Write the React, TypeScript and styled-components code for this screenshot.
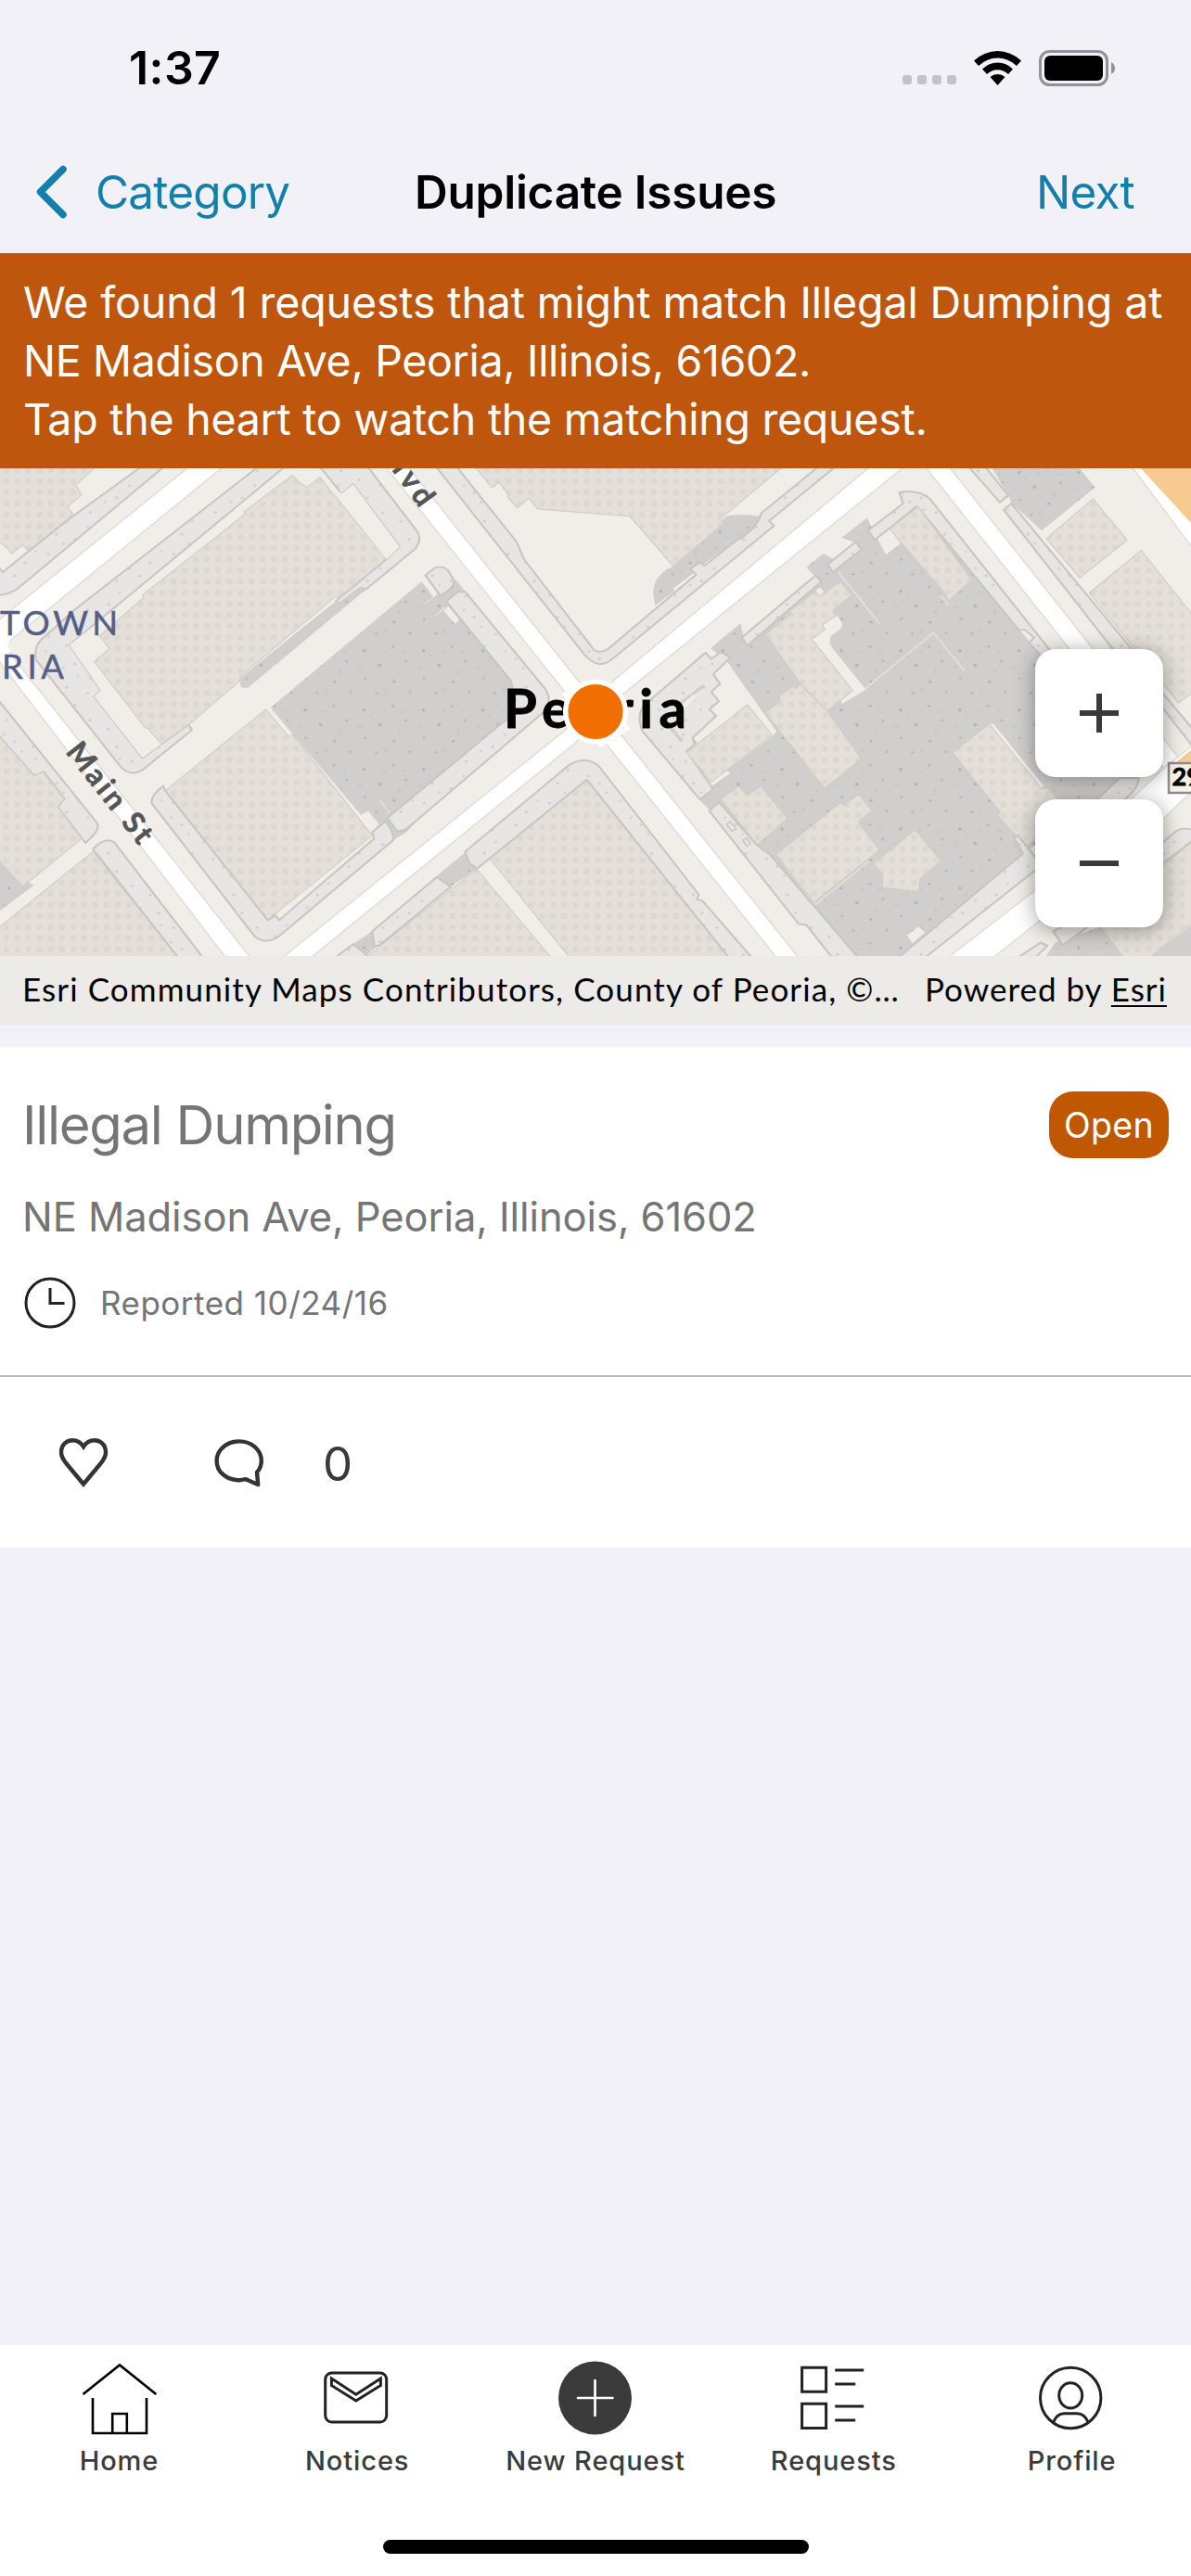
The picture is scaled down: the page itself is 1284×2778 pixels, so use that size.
import React, { FC, ReactNode } from 'react'
import styled, { createGlobalStyle, css } from 'styled-components'

const color = {
  background: '#f2f1f7',
  accent: '#bf560d',
  badge: '#bf5800',
  link: '#1280ab',
  grey: '#757575',
  dark: '#3a3a3a',
  marker: '#f06f00',
}

const App: FC = () => (
  <Screen>
    <GlobalStyle />
    <StatusBar />
    <NavBar>
      <NavBack>
        <ChevronIcon />
        <NavLink spacing={-0.8}>Category</NavLink>
      </NavBack>
      <NavTitle>Duplicate Issues</NavTitle>
      <NavNext>
        <NavLink spacing={-0.8}>Next</NavLink>
      </NavNext>
    </NavBar>
    <Banner>
      <BannerLine spacing={-0.12}>We found 1 requests that might match Illegal Dumping at</BannerLine>
      <BannerLine spacing={-0.34}>NE Madison Ave, Peoria, Illinois, 61602.</BannerLine>
      <BannerLine spacing={-0.25}>Tap the heart to watch the matching request.</BannerLine>
    </Banner>
    <MapPanel>
      <StreetMap />
      <ZoomControls>
        <ZoomButton aria-label="Zoom in">
          <svg width="42" height="42" viewBox="0 0 42 42">
            <path d="M0 21H42M21 0V42" stroke={color.dark} strokeWidth="6" />
          </svg>
        </ZoomButton>
        <ZoomButton aria-label="Zoom out">
          <svg width="42" height="42" viewBox="0 0 42 42">
            <path d="M0 21H42" stroke={color.dark} strokeWidth="6" />
          </svg>
        </ZoomButton>
      </ZoomControls>
      <Attribution>
        <Credits>Esri Community Maps Contributors, County of Peoria, ©…</Credits>
        <PoweredBy>
          Powered by <u>Esri</u>
        </PoweredBy>
      </Attribution>
    </MapPanel>
    <Card>
      <CardBody>
        <CardHeader>
          <CardTitle>Illegal Dumping</CardTitle>
          <Badge>Open</Badge>
        </CardHeader>
        <Address>NE Madison Ave, Peoria, Illinois, 61602</Address>
        <Reported>
          <ClockIcon />
          <span>Reported 10/24/16</span>
        </Reported>
      </CardBody>
      <CardActions>
        <HeartIcon />
        <Comments>
          <CommentIcon />
          <Count>0</Count>
        </Comments>
      </CardActions>
    </Card>
    <TabBar>
      <Tabs>
        {tabs.map(({ label, icon }) => (
          <Tab key={label}>
            <svg width="80" height="80" viewBox="0 0 80 80" fill="none" stroke="#222" strokeWidth="3" overflow="visible">
              {icon}
            </svg>
            <TabLabel>{label}</TabLabel>
          </Tab>
        ))}
      </Tabs>
      <HomeIndicator />
    </TabBar>
  </Screen>
)

export default App

const tabs: { label: string; icon: ReactNode }[] = [
  {
    label: 'Home',
    icon: (
      <path stroke="#000" strokeWidth="2.6" d="M1.5 36L41 4.5L80.3 36M12 40V78H70V40M33.2 78V57H48.8V78" />
    ),
  },
  {
    label: 'Notices',
    icon: (
      <>
        <rect x="5.7" y="13" width="66" height="53" rx="7" />
        <path d="M12.4 19L38.8 36.3L65.4 19V26.5L38.8 43L12.4 26.5Z" />
      </>
    ),
  },
  {
    label: 'New Request',
    icon: (
      <>
        <circle cx="39.5" cy="40" r="39.5" fill={color.dark} stroke="none" />
        <path stroke="#fff" strokeWidth="2.7" strokeLinecap="round" d="M21 40H58.5M39.5 21V59" />
      </>
    ),
  },
  {
    label: 'Requests',
    icon: (
      <path d="M5.6 7.3H31.6V33.3H5.6ZM5.6 46.3H31.6V72.6H5.6ZM41.2 10H72.2M41.2 25H63.2M41.2 49H72.2M41.2 64H63.2" />
    ),
  },
  {
    label: 'Profile',
    icon: (
      <>
        <circle cx="38.2" cy="40" r="32.7" />
        <ellipse cx="38.2" cy="37.3" rx="12.5" ry="13.6" />
        <path d="M19.8 66Q23 57 31.5 56.7H45.2Q53.5 57 57 66" />
      </>
    ),
  },
]

const StatusBar: FC = () => (
  <StatusRow>
    <Clock>1:37</Clock>
    <StatusIcons>
      <Signal>
        <i />
        <i />
        <i />
        <i />
      </Signal>
      <svg width="51" height="37" viewBox="0 0 51 37">
        <path d="M25.5 0Q39.5 0 51 10.5L46 16Q37 7.5 25.5 7.5T5 16L0 10.5Q11.5 0 25.5 0Z" />
        <path d="M25.5 12.5Q35 12.5 42 19.5L37 25Q32 20.2 25.5 20.2T14 25L9 19.5Q16 12.5 25.5 12.5Z" />
        <path d="M25.5 25Q30 25 33.5 28L25.5 37L17.5 28Q21 25 25.5 25Z" />
      </svg>
      <svg width="83" height="39" viewBox="0 0 83 39">
        <rect x="1.5" y="1.5" width="72" height="36" rx="10" fill="none" stroke="#929196" strokeWidth="3" />
        <rect x="6" y="6" width="63" height="27" rx="6" />
        <path d="M78 13Q82 15 82 19.5T78 26Z" fill="#929196" />
      </svg>
    </StatusIcons>
  </StatusRow>
)

const ChevronIcon: FC = () => (
  <svg width="34" height="58" viewBox="0 0 34 58" fill="none" stroke={color.link} strokeWidth="7.5" strokeLinecap="round" strokeLinejoin="round">
    <path d="M29 4.5L4.5 29L29 53.5" />
  </svg>
)

const ClockIcon: FC = () => (
  <svg width="56" height="56" viewBox="0 0 56 56" fill="none" stroke="#222" strokeWidth="3">
    <circle cx="28" cy="28" r="26" />
    <path d="M28 12V28.5H43.5" />
  </svg>
)

const HeartIcon: FC = () => (
  <svg width="54" height="54" viewBox="0 0 54 54" fill="none" stroke="#333" strokeWidth="4.4">
    <path d="M27 50.5L9.5 29.5C5 24 3 21 3 16.2C3 8.5 8.3 3.2 15.2 3.2C20.5 3.2 24.2 5.5 27 10C29.8 5.5 33.5 3.2 38.8 3.2C45.7 3.2 51 8.5 51 16.2C51 21 49 24 44.5 29.5Z" />
  </svg>
)

const CommentIcon: FC = () => (
  <svg width="54" height="52" viewBox="0 0 54 52" fill="none" stroke="#333" strokeWidth="4.4" strokeLinejoin="round" overflow="visible">
    <path d="M46 35.8C49.2 32.2 50.8 28 50.8 23.4C50.8 11.4 40 2.4 26.8 2.4S2.6 11.4 2.6 23.4S13.4 44.2 26.8 44.2C29.2 44.2 31.6 43.8 34 43.2L47.2 49Z" />
  </svg>
)

type ShapeProps = { d: string }

const Building: FC<ShapeProps> = ({ d }) => (
  <path d={d} fill="url(#building)" stroke="#d5ccc4" strokeWidth="3" />
)
const Walk: FC<ShapeProps> = ({ d }) => <path d={d} fill="url(#walk)" stroke="#c8c7bf" strokeWidth="5.5" />
const Lot: FC<ShapeProps> = ({ d }) => <path d={d} fill="url(#lot)" />
const Road: FC<ShapeProps> = ({ d }) => <path d={d} fill="#fff" stroke="#dfded7" strokeWidth="4" />
const Ground: FC<ShapeProps> = ({ d }) => <path d={d} fill="#f1eee9" />

const WestBlocks: FC = () => (
  <>
    <Building d="M-5 10H252L200 68L215 98L178 135L192 160L75 275L60 255L32 282L5 250H-5Z" />
    <Walk d="M372 10H432L45 393Q20 412 -5 412V325L8 340L75 275L192 165Z" />

    <Walk d="M680 10L200 455L110 550Q88 575 95 615L318 950Q345 985 380 955L505 835L497 818L425 878L375 922L248 730L265 710L183 568L750 10Z" />
    <Ground d="M183 568L310 450L740 40L770 37L425 878L375 922L248 730L265 710Z" />
    <Building d="M770 37L795 68L798 66L808 75L842 43L1018 300L895 432L885 415L632 668V680L497 818L425 878L388 828H382L248 620L288 580L262 540L378 420L375 412L646 158L642 152Z" />
    <Walk d="M842 10H968L1100 215Q1110 240 1095 265L965 393L950 388L895 437L885 430L1018 300L1052 260L930 65L900 95Z" />
    <Ground d="M848 43L900 95L930 65L1052 260L1018 300Z" />
    <Lot d="M885 430L895 437L950 388L965 393L655 700Q635 710 632 690V672Z" />

    <Lot d="M1110 370L1142 418L1200 365L1225 400L1430 700L1330 820L1070 1155L1035 1180L950 1100L712 765Z" />
    <Ground d="M1110 362L1122 355L1148 410L1140 416ZM1168 460L1180 447L1210 490L1198 503ZM950 1100L970 1088L998 1130L980 1155ZM700 770L712 765L770 848L760 855Z" />
    <path d="M1120 438L1145 415M1145 478L1170 452M1000 1055L1025 1095" stroke="#e3e1dd" strokeWidth="4" />
    <Walk d="M1120 350L1145 327Q1165 318 1180 335L1195 365Q1200 385 1160 415Z" />
    <Walk d="M1175 432L1205 402H1225L1435 705Q1455 740 1435 775L1075 1140Q1060 1155 1045 1150L1020 1110L1335 800Q1365 760 1345 680Z" />
    <Building d="M700 770L760 855L770 848L980 1165L970 1175L705 1430L435 1025Z" />
    <Walk d="M430 1010Q395 1040 400 1065L670 1480Q700 1510 735 1480L1035 1180Q1040 1160 1015 1120L980 1155L985 1175L735 1430L725 1415L705 1430L435 1025Z" />

    <Walk d="M-5 740L255 1125Q268 1145 225 1188L152 1075L170 1050L115 965L90 978L-5 850Z" />
    <Building d="M-5 850L90 978L112 965L170 1050L152 1075L215 1175L60 1325L-5 1240Z" />
    <Lot d="M-5 1240L60 1325L72 1310L90 1320L-5 1405Z" />
    <Building d="M-5 1455L245 1215L468 1545H-5Z" />
    <Walk d="M245 1208Q275 1168 300 1185L533 1545H468Z" />
  </>
)

const CentreBlocks: FC = () => (
  <>
    <Lot d="M1913 165Q1950 155 1998 165L1990 200L1833 350L1725 445Q1705 350 1758 315Z" />
    <path d="M1775 395L1830 345M1855 318L1945 240" stroke="#f1eee9" strokeWidth="8" />
    <Building d="M1250 10L1295 75L1315 60L1338 98L1336 104L1362 140L1392 108L1415 143L1568 157L1658 165L1773 322L1905 188L1895 175L2062 10Z" />
    <Ground d="M1415 143L1568 157L1658 165L1773 322L1758 330Q1705 370 1725 445L1600 570H1565L1400 300Z" />
    <path d="M1415 143L1568 157L1658 165L1773 322" fill="none" stroke="#d5ccc4" strokeWidth="3" />
    <Walk d="M1148 10L1540 600Q1578 650 1615 610L2038 195L2025 180L2200 10H2155L2005 155Q1990 210 1940 240L1855 320L1843 310L1818 330L1833 348L1600 582Q1580 595 1565 585L1380 300L1360 245L1202 10Z" />

    <Building d="M1545 990L1918 1545H1498L1288 1235Z" />
    <Building d="M1255 1270L1450 1545H965Z" />
    <Lot d="M1150 1292L1225 1218L1255 1270L1187 1325ZM930 1505L980 1465L995 1510L960 1545Z" />
    <Walk d="M1225 1215L1500 943Q1540 915 1575 945L1840 1350L1835 1365L1850 1370L1978 1545H1918L1545 990L1255 1270L1235 1250Z" />
    <Walk d="M980 1465L1150 1295L1187 1325L1000 1508L985 1512Z" />
    <Walk d="M885 1545L930 1505L965 1540V1545Z" />
  </>
)

const EastBlocks: FC = () => (
  <g transform="translate(1568 0)">
    <Lot d="M303 578L382 500L390 545L580 355L555 325L600 282L640 310L690 250L648 232L715 170L740 230L850 135L1200 640L1240 960L1430 980L1125 1222L805 1545H685L275 1055L300 1000L470 850L350 625Z" />
    <Ground d="M345 618L310 660L328 690L305 715L325 745L300 770L318 790L255 860L400 755L465 855L477 840Z" />
    <Ground d="M625 470Q655 490 648 515L620 540Q612 560 625 580L712 708L650 752L640 730L570 550Z" />
    <Ground d="M742 235L775 205L803 250L765 285ZM578 400L592 388L602 405L590 417ZM820 1478L850 1450L868 1468L835 1502ZM305 1010L300 1000L345 960L355 970ZM1037 815L1048 815L1180 1010L1170 1018Z" />
    <path d="M710 705L890 530M640 340L750 505M890 530L972 650M578 1382L720 1245M478 1225L578 1382M910 415L930 443" stroke="#e2dfda" strokeWidth="5" fill="none" />
    <Walk d="M800 90Q850 80 880 110L1200 590L1175 605L1142 560L1155 545L1130 520L1115 522L855 145L845 135L735 240L718 210L810 125Z" />
    <Walk d="M612 315L685 245L700 270L625 340Z" />
    <Walk d="M385 545L580 350L595 370L400 570Z" />
    <Walk d="M290 592L305 612L330 590L355 608L310 660L328 690L305 715L325 745L300 770L318 790L255 860L265 875L240 900L310 1020L275 1052L125 840Q105 790 130 755Z" />
    <path d="M215 760L285 695M200 830L228 870" stroke="#d0cec6" strokeWidth="9" />
    <path d="M222 770L262 728" stroke="#f1eee9" strokeWidth="14" />
    <Building d="M400 755L465 850L305 998L240 905Z" />
    <Building d="M448 535L515 470L512 462L580 400L590 415L645 370L675 412L625 460L635 475L597 505L605 520L570 550L678 712L610 775L540 690Z" />
    <Building d="M540 690L555 712L610 775L700 925L603 1017L460 800L448 780L485 745V725L520 700L528 705Z" />
    <Building d="M775 205L850 135L990 365L930 430L918 405Z" />
    <Building d="M330 1050L378 1010L400 1040L435 1010L505 1112L425 1195Z" />
    <Building d="M475 1225L645 1062L655 1070L693 1035L727 1087L692 1122L748 1210L575 1375Z" />
    <Building d="M842 1147L910 1245L855 1300L850 1340L755 1328L757 1290L732 1253Z" />
    <Building d="M940 905L1037 815L1175 1018L1190 1015L1240 1080L1135 1200L1060 1105L1065 1090Z" />
    <Walk d="M300 1088L325 1060L425 1195L460 1225L690 1545H622L555 1445L535 1442Z" />
    <path d="M345 1130L355 1122L370 1145L360 1152ZM388 1180L398 1172L408 1190L398 1198Z" fill="#e7e6e3" stroke="#c8c7bf" strokeWidth="4" />
    <Walk d="M800 1545L1125 1222L1102 1170L1112 1165L1160 1235L1380 985H1430Q1430 1020 1385 1060L870 1545Z" />

    <Road d="M868 10H931L1250 490L1600 1020L1500 960Z" />
    <Walk d="M982 10H1026L1087 100L1065 122Z" />
    <Walk d="M1095 125L1075 145L1368 590H1418Z" />
    <Lot d="M1042 10H1272L1315 75L1175 210L1097 125L1087 100Z" />
    <Building d="M1310 110L1400 240L1275 358L1187 235Z" />
    <Building d="M1437 272L1575 478V715L1535 750L1300 405Z" />
    <Walk d="M1480 700L1575 835V890L1480 745Z" />
    <Road d="M1412 10H1575V270Z" />
    <path d="M1432 10H1575V195Z" fill="#f6ca90" />

    <Road d="M930 1545L1160 1335L1500 950L1575 880V1025L1545 1055L1450 1165L1050 1545Z" />
    <path d="M1530 935L1575 890V935Z" fill="#f6ca90" />
    <Lot d="M1210 1500L1330 1450L1390 1545H1185ZM1460 1545L1575 1440V1545Z" />
    <Building d="M1320 1435L1495 1260L1575 1180V1435L1460 1545H1390Z" />
    <Walk d="M1480 1200L1530 1150Q1550 1138 1575 1148V1178L1480 1265Z" />
    <Walk d="M1205 1465L1260 1430L1310 1440L1230 1508Z" />
    <Walk d="M1115 1545L1172 1500L1190 1510L1160 1545Z" />
  </g>
)

const StreetMap: FC = () => (
  <MapCanvas viewBox="0 0 1284 526">
    <defs>
      <pattern id="building" width="29.4" height="34.9" patternUnits="userSpaceOnUse">
        <rect width="29.4" height="34.9" fill="#e4dfd9" />
        <rect x="9" y="13" width="14" height="16" fill="#ddd7d0" />
      </pattern>
      <pattern id="walk" width="110" height="130" patternUnits="userSpaceOnUse">
        <rect width="110" height="130" fill="#e7e6e4" />
        <path d="M14 20h7v7h-7zM62 48h7v7h-7zM92 12h6v6h-6zM35 88h7v7h-7zM84 104h7v7h-7zM8 66h6v6h-6zM54 118h6v6h-6z" fill="#cdcdc9" />
      </pattern>
      <pattern id="lot" width="156" height="186" patternUnits="userSpaceOnUse">
        <rect width="156" height="186" fill="#d0cfcd" />
        <path d="M20 24h7v8h-7zM96 12h6v6h-6zM60 70h8v8h-8zM130 58h6v6h-6zM22 112h6v6h-6zM98 122h7v7h-7zM140 156h6v6h-6zM52 158h6v6h-6z" fill="#b0b0ae" />
        <path d="M72 30h10v6h-10zM112 88h7v12h-7zM6 76h12v6h-12zM76 148h6v12h-6zM38 44h5v8h-5zM122 30h10v6h-10z" fill="#c7c7c5" />
      </pattern>
    </defs>
    <rect width="1284" height="526" fill="#f1eee9" />
    <g transform="scale(0.40943 0.34439) translate(0 -15)">
      <WestBlocks />
      <CentreBlocks />
      <Road d="M498 10H588L10 570L-40 600V525Z" />
      <Road d="M-60 530L10 570L658 1545H593Z" />
      <EastBlocks />
      <Road d="M1015 10H1074L2101 1545H2043Z" />
      <Road d="M746 1545L1485 838L1613 682L2291 10H2381L1643 720L1515 875L821 1545Z" />
      <path d="M1480 720L1540 690L1660 830L1580 890Z" fill="#fff" />
      <path d="M-10 535L50 480L20 570L30 590L-10 600Z" fill="#fff" />
    </g>
    <MapLabel x="0" y="179.5" size={36.5} tint="#565e88" weight={400} outline={0.5} textLength="127">
      TOWN
    </MapLabel>
    <MapLabel x="2" y="226.5" size={36.5} tint="#565e88" weight={400} outline={0.5} textLength="67">
      RIA
    </MapLabel>
    <MapLabel size={32} tint="#555" weight={700} outline={0.6} textLength="129" transform="translate(70 306) rotate(51.8)">
      Main St
    </MapLabel>
    <MapLabel size={32} tint="#555" weight={700} outline={0.6} textLength="52" transform="translate(422 1.5) rotate(54)">
      lvd
    </MapLabel>
    <MapLabel x="543" y="280" size={58} tint="#000" weight={700} outline={0.8} textLength="197">
      Peoria
    </MapLabel>
    <rect x="1260" y="318" width="40" height="32" fill="#f6f2e7" stroke="#8c8c88" strokeWidth="2.5" />
    <MapLabel x="1263.5" y="342" size={27} tint="#000" weight={700} outline={0.8}>
      29
    </MapLabel>
    <circle cx="642" cy="262.5" r="32.3" fill={color.marker} stroke="#fff" strokeWidth="5.5" />
  </MapCanvas>
)

const GlobalStyle = createGlobalStyle`
  * {
    box-sizing: border-box;
  }

  body {
    margin: 0;
    background: ${color.background};
    font-family: Inter, 'Liberation Sans', sans-serif;
  }

  svg {
    display: block;
    flex: none;
  }
`

const Screen = styled.div`
  width: 1284px;
  height: 2778px;
  display: flex;
  flex-direction: column;
  overflow: hidden;
  background: ${color.background};
  white-space: nowrap;
`

const StatusRow = styled.div`
  height: 141px;
  padding: 5px 81px 0 139px;
  display: flex;
  align-items: center;
  justify-content: space-between;
`

const Clock = styled.div`
  font-size: 50px;
  font-weight: 600;
  letter-spacing: 0.4px;
`

const StatusIcons = styled.div`
  display: flex;
  align-items: center;
  gap: 19px;
`

const Signal = styled.div`
  margin-bottom: 2px;
  display: flex;
  gap: 6px;
  align-self: flex-end;

  i {
    width: 10px;
    height: 10px;
    border-radius: 3px;
    background: #c3c2c7;
  }
`

const NavBar = styled.nav`
  height: 132px;
  padding: 0 61px 0 39px;
  display: grid;
  grid-template-columns: 408px 1fr 200px;
  align-items: center;
`

const NavBack = styled.div`
  display: flex;
  align-items: center;
  gap: 30px;
`

const NavNext = styled.div`
  display: flex;
  justify-content: flex-end;
`

const NavLink = styled.span<{ spacing: number }>`
  color: ${color.link};
  font-size: 49.5px;
  letter-spacing: ${({ spacing }) => spacing}px;
`

const NavTitle = styled.h1`
  margin: 0;
  font-size: 49.5px;
  font-weight: 600;
  letter-spacing: -0.25px;
`

const Banner = styled.section`
  height: 232px;
  padding: 22px 25px 0;
  background: ${color.accent};
  color: #fff;
  font-size: 46.5px;
  line-height: 63px;
`

const BannerLine = styled.div<{ spacing: number }>`
  letter-spacing: ${({ spacing }) => spacing}px;
`

const MapPanel = styled.section`
  position: relative;
  height: 600px;
`

const MapCanvas = styled.svg`
  width: 1284px;
  height: 526px;
`

const MapLabel = styled.text<{ size: number; tint: string; weight: number; outline: number }>`
  ${({ size, tint, weight, outline }) => css`
    font-family: Lato, sans-serif;
    font-size: ${size}px;
    font-weight: ${weight};
    fill: ${tint};
    stroke: ${tint};
    stroke-width: ${outline}px;
  `}
`

const ZoomControls = styled.div`
  position: absolute;
  top: 195px;
  right: 30px;
  display: flex;
  flex-direction: column;
  gap: 24px;
`

const ZoomButton = styled.button`
  width: 138px;
  height: 138px;
  padding: 0;
  display: flex;
  align-items: center;
  justify-content: center;
  border: 0;
  border-radius: 22px;
  background: #fff;
  box-shadow: 0 3px 22px rgba(0, 0, 0, 0.38);
`

const Attribution = styled.div`
  height: 74px;
  padding: 0 26px 4px 24px;
  display: flex;
  align-items: center;
  justify-content: space-between;
  position: relative;
  background: #ecebe8;
  font-family: Lato, sans-serif;
  font-size: 35px;
`

const Credits = styled.span`
  letter-spacing: 1.1px;
`

const PoweredBy = styled.span`
  letter-spacing: 1px;

  u {
    text-decoration-thickness: 2px;
    text-underline-offset: 4px;
  }
`

const Card = styled.article`
  height: 540px;
  margin-top: 24px;
  background: #fff;
  color: ${color.grey};
`

const CardBody = styled.div`
  height: 356px;
  padding: 48px 24px 0;
  border-bottom: 2px solid #b8b8b8;
`

const CardHeader = styled.div`
  height: 72px;
  display: flex;
  align-items: center;
  justify-content: space-between;
`

const CardTitle = styled.h2`
  margin: 0;
  font-size: 58px;
  font-weight: 400;
  letter-spacing: -1.3px;
`

const Badge = styled.span`
  width: 129px;
  height: 72px;
  border-radius: 26px;
  background: ${color.badge};
  color: #fff;
  font-size: 37.5px;
  line-height: 73px;
  letter-spacing: 0.3px;
  text-align: center;
`

const Address = styled.div`
  margin-top: 33px;
  font-size: 43.5px;
  line-height: 60px;
  letter-spacing: -0.07px;
`

const Reported = styled.div`
  margin-top: 35px;
  padding-left: 2px;
  display: flex;
  align-items: center;
  gap: 26px;
  font-size: 35px;
  line-height: 56px;
  letter-spacing: 0.5px;
`

const CardActions = styled.div`
  height: 184px;
  padding-left: 63px;
  display: flex;
  align-items: center;
  gap: 114px;
`

const Comments = styled.div`
  padding-top: 2px;
  display: flex;
  align-items: center;
  gap: 63px;
`

const Count = styled.span`
  color: ${color.dark};
  font-size: 51px;
`

const TabBar = styled.footer`
  height: 249px;
  margin-top: auto;
  padding: 17px 0 24px;
  display: flex;
  flex-direction: column;
  align-items: center;
  justify-content: space-between;
  background: #fff;
`

const Tabs = styled.div`
  width: 100%;
  display: grid;
  grid-template-columns: repeat(5, 1fr);
`

const Tab = styled.div`
  display: flex;
  flex-direction: column;
  align-items: center;
`

const TabLabel = styled.span`
  margin-top: 7.5px;
  color: ${color.dark};
  font-size: 29px;
  font-weight: 500;
  line-height: 40px;
  letter-spacing: 0.9px;
`

const HomeIndicator = styled.div`
  width: 459px;
  height: 15px;
  border-radius: 8px;
  background: #000;
`
